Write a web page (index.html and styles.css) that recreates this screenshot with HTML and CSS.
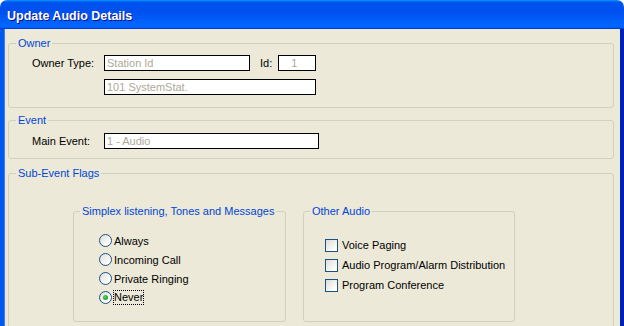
FILE: index.html
```html
<!DOCTYPE html>
<html lang="en">
<head>
    <meta charset="UTF-8">
    <title>Update Audio Details</title>
    <link rel="stylesheet" href="styles.css">
</head>
<body>
    <div class="window">
        <div class="title-bar">
            <span class="title-text">Update Audio Details</span>
        </div>

        <div class="window-body">
            <fieldset class="group owner">
                <legend>Owner</legend>
                <div class="group-rows">
                    <div class="form-row">
                        <label class="field-label">Owner Type:</label>
                        <input class="field field-type" type="text" value="Station Id" readonly>
                        <label class="id-label">Id:</label>
                        <input class="field field-id" type="text" value="1" readonly>
                    </div>
                    <div class="form-row">
                        <span class="field-label"></span>
                        <input class="field field-name" type="text" value="101 SystemStat." readonly>
                    </div>
                </div>
            </fieldset>

            <fieldset class="group event">
                <legend>Event</legend>
                <div class="group-rows event-rows">
                    <div class="form-row">
                        <label class="field-label">Main Event:</label>
                        <input class="field field-event" type="text" value="1 - Audio" readonly>
                    </div>
                </div>
            </fieldset>

            <fieldset class="group flags">
                <legend>Sub-Event Flags</legend>
                <div class="flag-groups">
                    <fieldset class="group inner simplex">
                        <legend>Simplex listening, Tones and Messages</legend>
                        <div class="option-list radio-list">
                            <div class="option"><span class="radio"></span><span>Always</span></div>
                            <div class="option"><span class="radio"></span><span>Incoming Call</span></div>
                            <div class="option"><span class="radio"></span><span>Private Ringing</span></div>
                            <div class="option"><span class="radio checked"></span><span class="focused">Never</span></div>
                        </div>
                    </fieldset>

                    <fieldset class="group inner other">
                        <legend>Other Audio</legend>
                        <div class="option-list check-list">
                            <div class="option"><span class="checkbox"></span><span>Voice Paging</span></div>
                            <div class="option"><span class="checkbox"></span><span>Audio Program/Alarm Distribution</span></div>
                            <div class="option"><span class="checkbox"></span><span>Program Conference</span></div>
                        </div>
                    </fieldset>
                </div>
            </fieldset>
        </div>
    </div>
</body>
</html>
```

FILE: styles.css
```css
body {
    margin: 0;
    padding: 0;
    background: #ffffff;
    font-family: "Liberation Sans", Arial, sans-serif;
    font-size: 11px;
    color: #000000;
}

.window {
    width: 624px;
    height: 326px;
    overflow: hidden;
    display: flex;
    flex-direction: column;
}

.title-bar {
    height: 29px;
    flex-shrink: 0;
    display: flex;
    align-items: center;
    padding-left: 7px;
    border-top-left-radius: 7px;
    border-top-right-radius: 7px;
    background: linear-gradient(180deg, #0997ff, #0053ee 8%, #0050ee 40%, #0066ff 88%, #0066ff 93%, #005bff 95%, #003dd7 96%, #003dd7);
}

.title-text {
    color: #ffffff;
    font-weight: bold;
    font-size: 12.5px;
    padding-top: 3px;
    text-shadow: 1px 1px #0f1089;
}

.window-body {
    flex: 1;
    background: #ece9d8;
    border-left: 4px solid #0058ee;
    border-right: 4px solid #0021b8;
    box-shadow: inset 1px 0 #3c7fff;
}

.group {
    margin: 0;
    padding: 0;
    min-width: 0;
    border: 1px solid #d0d0bf;
    border-radius: 3px;
}

.group legend {
    margin-left: 7px;
    padding: 0 2px;
    line-height: 13px;
    color: #0046d5;
}

.owner,
.event,
.flags {
    margin-left: 4px;
    width: 606px;
    box-sizing: border-box;
}

.owner {
    margin-top: 8px;
}

.event {
    margin-top: 6px;
}

.flags {
    margin-top: 8px;
    padding-bottom: 30px;
}

.group-rows {
    display: flex;
    flex-direction: column;
    gap: 8px;
    padding: 5px 0 12px 23px;
}

.event-rows {
    padding: 6px 0 9px 23px;
}

.form-row {
    display: flex;
    align-items: center;
    height: 16px;
}

.field-label {
    width: 72px;
    flex-shrink: 0;
}

.id-label {
    margin: 0 6px 0 10px;
}

.field {
    box-sizing: border-box;
    height: 16px;
    margin: 0;
    padding: 0 2px;
    border: 1px solid #000000;
    border-radius: 0;
    background: #ffffff;
    color: #aca899;
    font-family: "Liberation Sans", Arial, sans-serif;
    font-size: 11px;
    outline: none;
}

.field-type {
    width: 146px;
}

.field-id {
    width: 38px;
    padding-left: 12px;
}

.field-name {
    width: 212px;
}

.field-event {
    width: 215px;
}

.flag-groups {
    display: flex;
    gap: 17px;
    padding: 25px 0 0 64px;
}

.inner legend {
    margin-left: 6px;
}

.simplex {
    width: 213px;
    box-sizing: border-box;
}

.other {
    width: 212px;
    box-sizing: border-box;
}

.option-list {
    display: flex;
    flex-direction: column;
}

.radio-list {
    padding: 13px 0 14px 25px;
}

.check-list {
    padding: 17px 0 0 21px;
}

.option {
    display: flex;
    align-items: center;
    gap: 2px;
}

.radio-list .option {
    height: 19px;
}

.check-list .option {
    height: 20px;
    gap: 4px;
}

.radio {
    position: relative;
    width: 13px;
    height: 13px;
    box-sizing: border-box;
    border: 1px solid #1c5180;
    border-radius: 50%;
    background: linear-gradient(135deg, #dcdcd7, #ffffff 80%);
}

.radio.checked::after {
    content: "";
    position: absolute;
    left: 3px;
    top: 3px;
    width: 5px;
    height: 5px;
    border-radius: 50%;
    background: radial-gradient(circle at 40% 40%, #55d551, #21a121 70%);
}

.checkbox {
    width: 13px;
    height: 13px;
    box-sizing: border-box;
    border: 1px solid #1c5180;
    background: linear-gradient(135deg, #dcdcd7, #ffffff 85%);
}

.focused {
    outline: 1px dotted #000000;
    line-height: 13px;
}
```
